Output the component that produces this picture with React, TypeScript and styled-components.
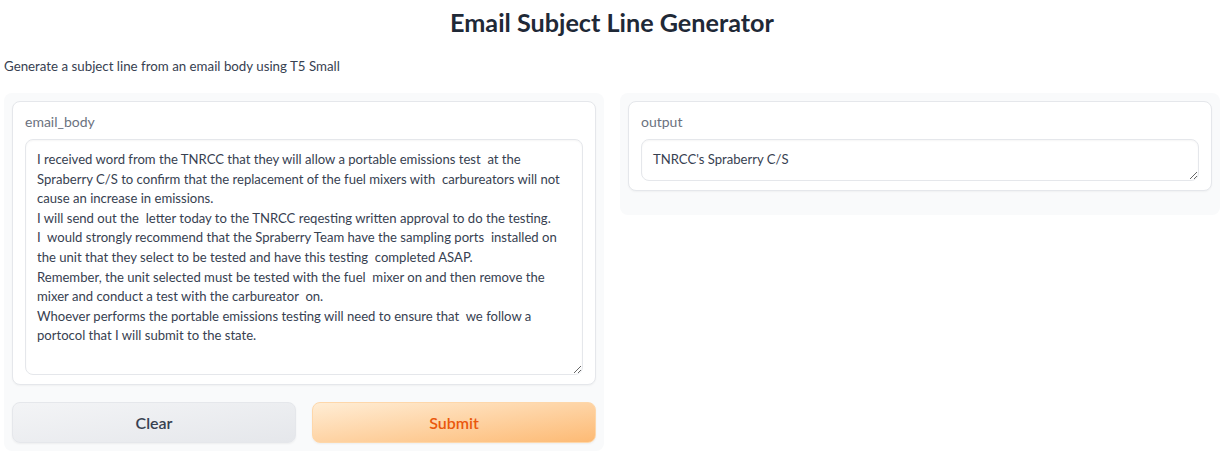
import React from "react";
import styled, { createGlobalStyle } from "styled-components";

const Global = createGlobalStyle`
  html, body { margin: 0; padding: 0; background: #ffffff; }
  body { font-family: "Lato", "Open Sans", sans-serif; color: #374151; }
  * { box-sizing: border-box; }
`;

const Page = styled.div`
  padding: 0 7px 0 4px;
  display: flex;
  flex-direction: column;
`;

const Title = styled.h1`
  margin: 0;
  padding-top: 6px;
  height: 40px;
  text-align: center;
  font-size: 25.2px;
  font-weight: 700;
  color: #1f2937;
  line-height: 32px;
`;

const Description = styled.p`
  margin: 16px 0 0;
  font-size: 13.3px;
  line-height: 20px;
  color: #374151;
`;

const Columns = styled.div`
  display: flex;
  gap: 16px;
  align-items: flex-start;
  margin-top: 17px;
`;

const Panel = styled.div<{ $bottom?: number }>`
  flex: 1;
  background: #f9fafb;
  border-radius: 8px;
  padding: 8px 8px ${(p) => p.$bottom ?? 8}px;
  display: flex;
  flex-direction: column;
  gap: 17px;
`;

const Block = styled.div`
  background: #ffffff;
  border: 1px solid #e5e7eb;
  border-radius: 8px;
  padding: 11px 12px 9px;
  box-shadow: 0 1px 2px rgba(0,0,0,0.04);
  display: flex;
  flex-direction: column;
  gap: 8px;
`;

const Label = styled.span`
  font-size: 14px;
  line-height: 18px;
  color: #6b7280;
`;

const Area = styled.textarea<{ $h: number }>`
  width: 100%;
  height: ${(p) => p.$h}px;
  border: 1px solid #e5e7eb;
  border-radius: 8px;
  padding: 10px 11px 8px;
  font-family: inherit;
  font-size: 13.1px;
  line-height: 19.6px;
  color: #374151;
  background: #ffffff;
  box-shadow: inset 0 1px 2px rgba(0,0,0,0.04);
  resize: vertical;
  outline: none;
`;

const Buttons = styled.div`
  display: flex;
  gap: 16px;
`;

const Button = styled.button<{ $primary?: boolean }>`
  flex: 1;
  height: 41px;
  border-radius: 8px;
  font-family: inherit;
  font-size: 16px;
  font-weight: 600;
  cursor: pointer;
  border: 1px solid ${(p) => (p.$primary ? "#fed7aa" : "#e5e7eb")};
  color: ${(p) => (p.$primary ? "#ea580c" : "#374151")};
  background: ${(p) =>
    p.$primary
      ? "linear-gradient(to bottom right, #ffedd5, #fdba74)"
      : "linear-gradient(to bottom right, #f3f4f6, #e5e7eb)"};
  box-shadow: 0 1px 2px rgba(0,0,0,0.05);
`;

const body = `I received word from the TNRCC that they will allow a portable emissions test  at the Spraberry C/S to confirm that the replacement of the fuel mixers with  carbureators will not cause an increase in emissions.
I will send out the  letter today to the TNRCC reqesting written approval to do the testing.
I  would strongly recommend that the Spraberry Team have the sampling ports  installed on the unit that they select to be tested and have this testing  completed ASAP.
Remember, the unit selected must be tested with the fuel  mixer on and then remove the mixer and conduct a test with the carbureator  on.
Whoever performs the portable emissions testing will need to ensure that  we follow a portocol that I will submit to the state.`;

export default function App() {
  return (
    <>
      <Global />
      <Page>
        <Title>Email Subject Line Generator</Title>
        <Description>Generate a subject line from an email body using T5 Small</Description>
        <Columns>
          <Panel>
            <Block>
              <Label>email_body</Label>
              <Area $h={236} defaultValue={body} spellCheck={false} />
            </Block>
            <Buttons>
              <Button>Clear</Button>
              <Button $primary>Submit</Button>
            </Buttons>
          </Panel>
          <Panel $bottom={24}>
            <Block>
              <Label>output</Label>
              <Area $h={42} defaultValue="TNRCC's Spraberry C/S" readOnly />
            </Block>
          </Panel>
        </Columns>
      </Page>
    </>
  );
}
